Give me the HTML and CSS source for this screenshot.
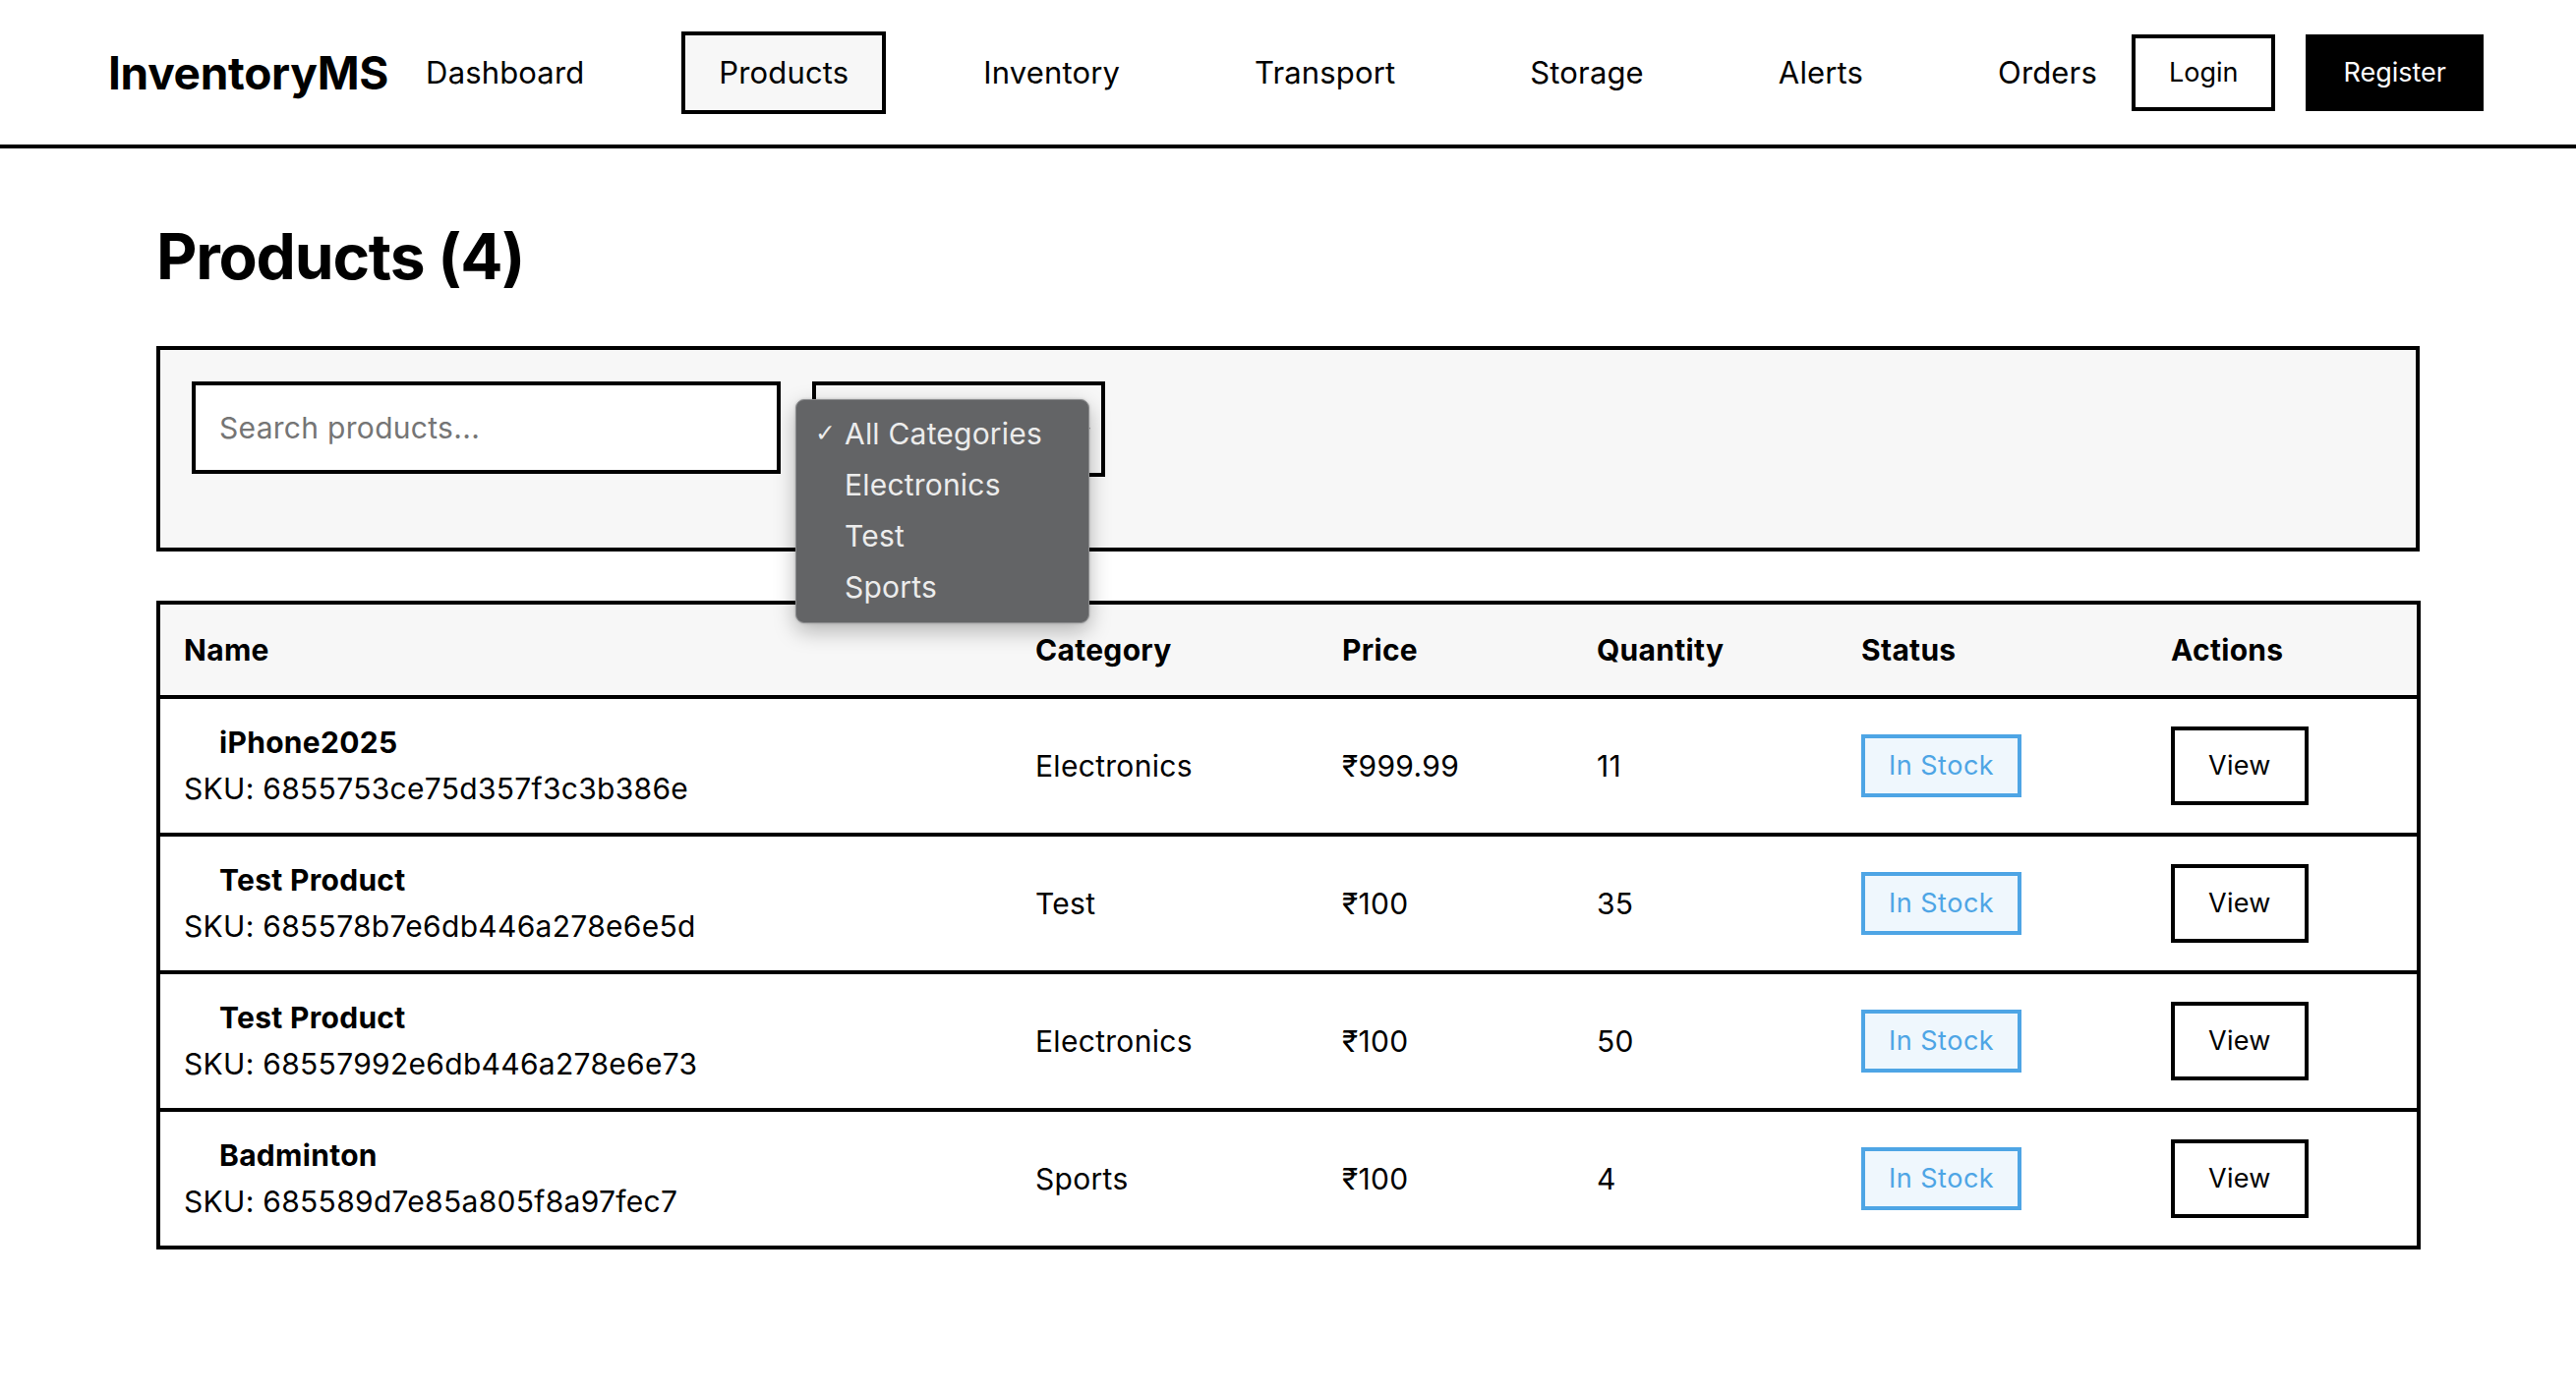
FILE: index.html
```html
<!DOCTYPE html>
<html lang="en">
<head>
<meta charset="utf-8">
<title>InventoryMS - Products</title>
<link rel="stylesheet" href="styles.css">
</head>
<body>
<header class="topbar">
  <div class="logo">InventoryMS</div>
  <nav class="nav">
    <a class="nav-link">Dashboard</a>
    <a class="nav-link active">Products</a>
    <a class="nav-link">Inventory</a>
    <a class="nav-link">Transport</a>
    <a class="nav-link">Storage</a>
    <a class="nav-link">Alerts</a>
    <a class="nav-link">Orders</a>
  </nav>
  <div class="auth">
    <a class="btn-login">Login</a>
    <a class="btn-register">Register</a>
  </div>
</header>

<main class="main">
  <h1 class="title">Products (4)</h1>

  <section class="filters">
    <div class="search">Search products...</div>
    <div class="select-wrap">
      <div class="select">
        <span>All Categories</span>
        <svg class="chev" width="14" height="10" viewBox="0 0 14 10"><path d="M2 2 L7 7 L12 2" fill="none" stroke="#333" stroke-width="2"/></svg>
      </div>
      <div class="menu">
        <div class="menu-item"><span class="check">✓</span>All Categories</div>
        <div class="menu-item">Electronics</div>
        <div class="menu-item">Test</div>
        <div class="menu-item">Sports</div>
      </div>
    </div>
  </section>

  <table class="table">
    <colgroup>
      <col class="c-name"><col class="c-cat"><col class="c-price"><col class="c-qty"><col class="c-status"><col class="c-act">
    </colgroup>
    <thead>
      <tr><th>Name</th><th>Category</th><th>Price</th><th>Quantity</th><th>Status</th><th>Actions</th></tr>
    </thead>
    <tbody>
      <tr>
        <td><div class="pname">iPhone2025</div><div class="sku">SKU: 6855753ce75d357f3c3b386e</div></td>
        <td>Electronics</td><td>₹999.99</td><td>11</td>
        <td><span class="badge">In Stock</span></td>
        <td><a class="btn-view">View</a></td>
      </tr>
      <tr>
        <td><div class="pname">Test Product</div><div class="sku">SKU: 685578b7e6db446a278e6e5d</div></td>
        <td>Test</td><td>₹100</td><td>35</td>
        <td><span class="badge">In Stock</span></td>
        <td><a class="btn-view">View</a></td>
      </tr>
      <tr>
        <td><div class="pname">Test Product</div><div class="sku">SKU: 68557992e6db446a278e6e73</div></td>
        <td>Electronics</td><td>₹100</td><td>50</td>
        <td><span class="badge">In Stock</span></td>
        <td><a class="btn-view">View</a></td>
      </tr>
      <tr>
        <td><div class="pname">Badminton</div><div class="sku">SKU: 685589d7e85a805f8a97fec7</div></td>
        <td>Sports</td><td>₹100</td><td>4</td>
        <td><span class="badge">In Stock</span></td>
        <td><a class="btn-view">View</a></td>
      </tr>
    </tbody>
  </table>
</main>
</body>
</html>
```

FILE: styles.css
```css
* { box-sizing: border-box; }
html, body { margin: 0; padding: 0; background: #fff; }
body {
  font-family: Inter, "Liberation Sans", sans-serif;
  color: #000;
  font-size: 30px;
  letter-spacing: 0.3px;
}
a { color: inherit; text-decoration: none; cursor: pointer; }

.topbar {
  display: flex;
  align-items: center;
  height: 151px;
  border-bottom: 4px solid #000;
  padding-left: 110px;
}
.logo {
  font-size: 46px;
  font-weight: 700;
  letter-spacing: -0.3px;
}
.nav {
  display: flex;
  align-items: center;
  gap: 61px;
}
.nav-link {
  display: block;
  font-size: 31px;
  line-height: 36px;
  letter-spacing: 0.15px;
  padding: 20px 34px;
  border: 4px solid transparent;
}
.nav-link.active {
  border-color: #000;
  background: #f7f7f7;
}
.auth {
  display: flex;
  align-items: center;
  gap: 31px;
  margin-left: -3px;
}
.btn-login, .btn-register {
  display: block;
  font-size: 27px;
  line-height: 32px;
  letter-spacing: 0;
  padding: 19px 34px;
  border: 4px solid #000;
}
.btn-register {
  background: #000;
  color: #fff;
}

.main {
  padding: 0 159px;
}
.title {
  margin: 71px 0 53px;
  font-size: 64px;
  line-height: 77px;
  font-weight: 700;
  letter-spacing: -1.2px;
}

.filters {
  display: flex;
  align-items: flex-start;
  gap: 32px;
  background: #f7f7f7;
  border: 4px solid #000;
  padding: 32px 32px 72px;
  height: 209px;
}
.search {
  width: 599px;
  height: 94px;
  border: 4px solid #000;
  background: #fff;
  padding-left: 24px;
  display: flex;
  align-items: center;
  color: #757575;
  font-size: 30px;
}
.select-wrap {
  position: relative;
}
.select {
  width: 298px;
  height: 97px;
  border: 4px solid #000;
  background: #f7f7f7;
  display: flex;
  align-items: center;
  justify-content: space-between;
  padding: 0 10px 0 24px;
  font-size: 30px;
}
.chev { margin-top: 2px; }
.menu {
  position: absolute;
  left: -17px;
  top: 18px;
  width: 299px;
  height: 228px;
  background: #636466;
  border: 1px solid #8c8d8f;
  border-radius: 9px;
  box-shadow: 0 8px 22px rgba(0,0,0,0.28), 0 0 3px rgba(0,0,0,0.2);
  padding: 8px 0 0;
  color: #ececec;
  z-index: 5;
}
.menu-item {
  position: relative;
  height: 52px;
  line-height: 52px;
  padding-left: 49px;
  font-size: 30px;
  letter-spacing: 0.2px;
}
.check {
  position: absolute;
  left: 19px;
  top: 0;
  font-family: "DejaVu Sans", sans-serif;
  font-size: 25px;
}

.table {
  margin-top: 50px;
  width: 100%;
  border: 4px solid #000;
  border-collapse: separate;
  border-spacing: 0;
  table-layout: fixed;
}
.c-name { width: 866px; }
.c-cat { width: 312px; }
.c-price { width: 259px; }
.c-qty { width: 269px; }
.c-status { width: 315px; }
.c-act { width: 274px; }

.table th {
  background: #f7f7f7;
  text-align: left;
  font-weight: 700;
  font-size: 30px;
  height: 96px;
  padding: 0 24px;
  border-bottom: 4px solid #000;
  vertical-align: middle;
}
.table td {
  padding: 24px 24px 25px;
  vertical-align: middle;
  border-bottom: 4px solid #000;
  font-size: 30px;
  line-height: 40px;
}
.table tbody tr:last-child td { border-bottom: none; }
.pname {
  font-weight: 700;
  padding-left: 36px;
  margin-bottom: 7px;
}
.badge {
  display: inline-block;
  font-size: 27px;
  line-height: 32px;
  padding: 12px 24px;
  border: 4px solid #4ea5e5;
  background: #eff7fd;
  color: #4ea5e5;
  letter-spacing: 0.5px;
}
.btn-view {
  display: inline-block;
  font-size: 27px;
  line-height: 32px;
  padding: 20px 34px;
  border: 4px solid #000;
  background: #fff;
}
```
